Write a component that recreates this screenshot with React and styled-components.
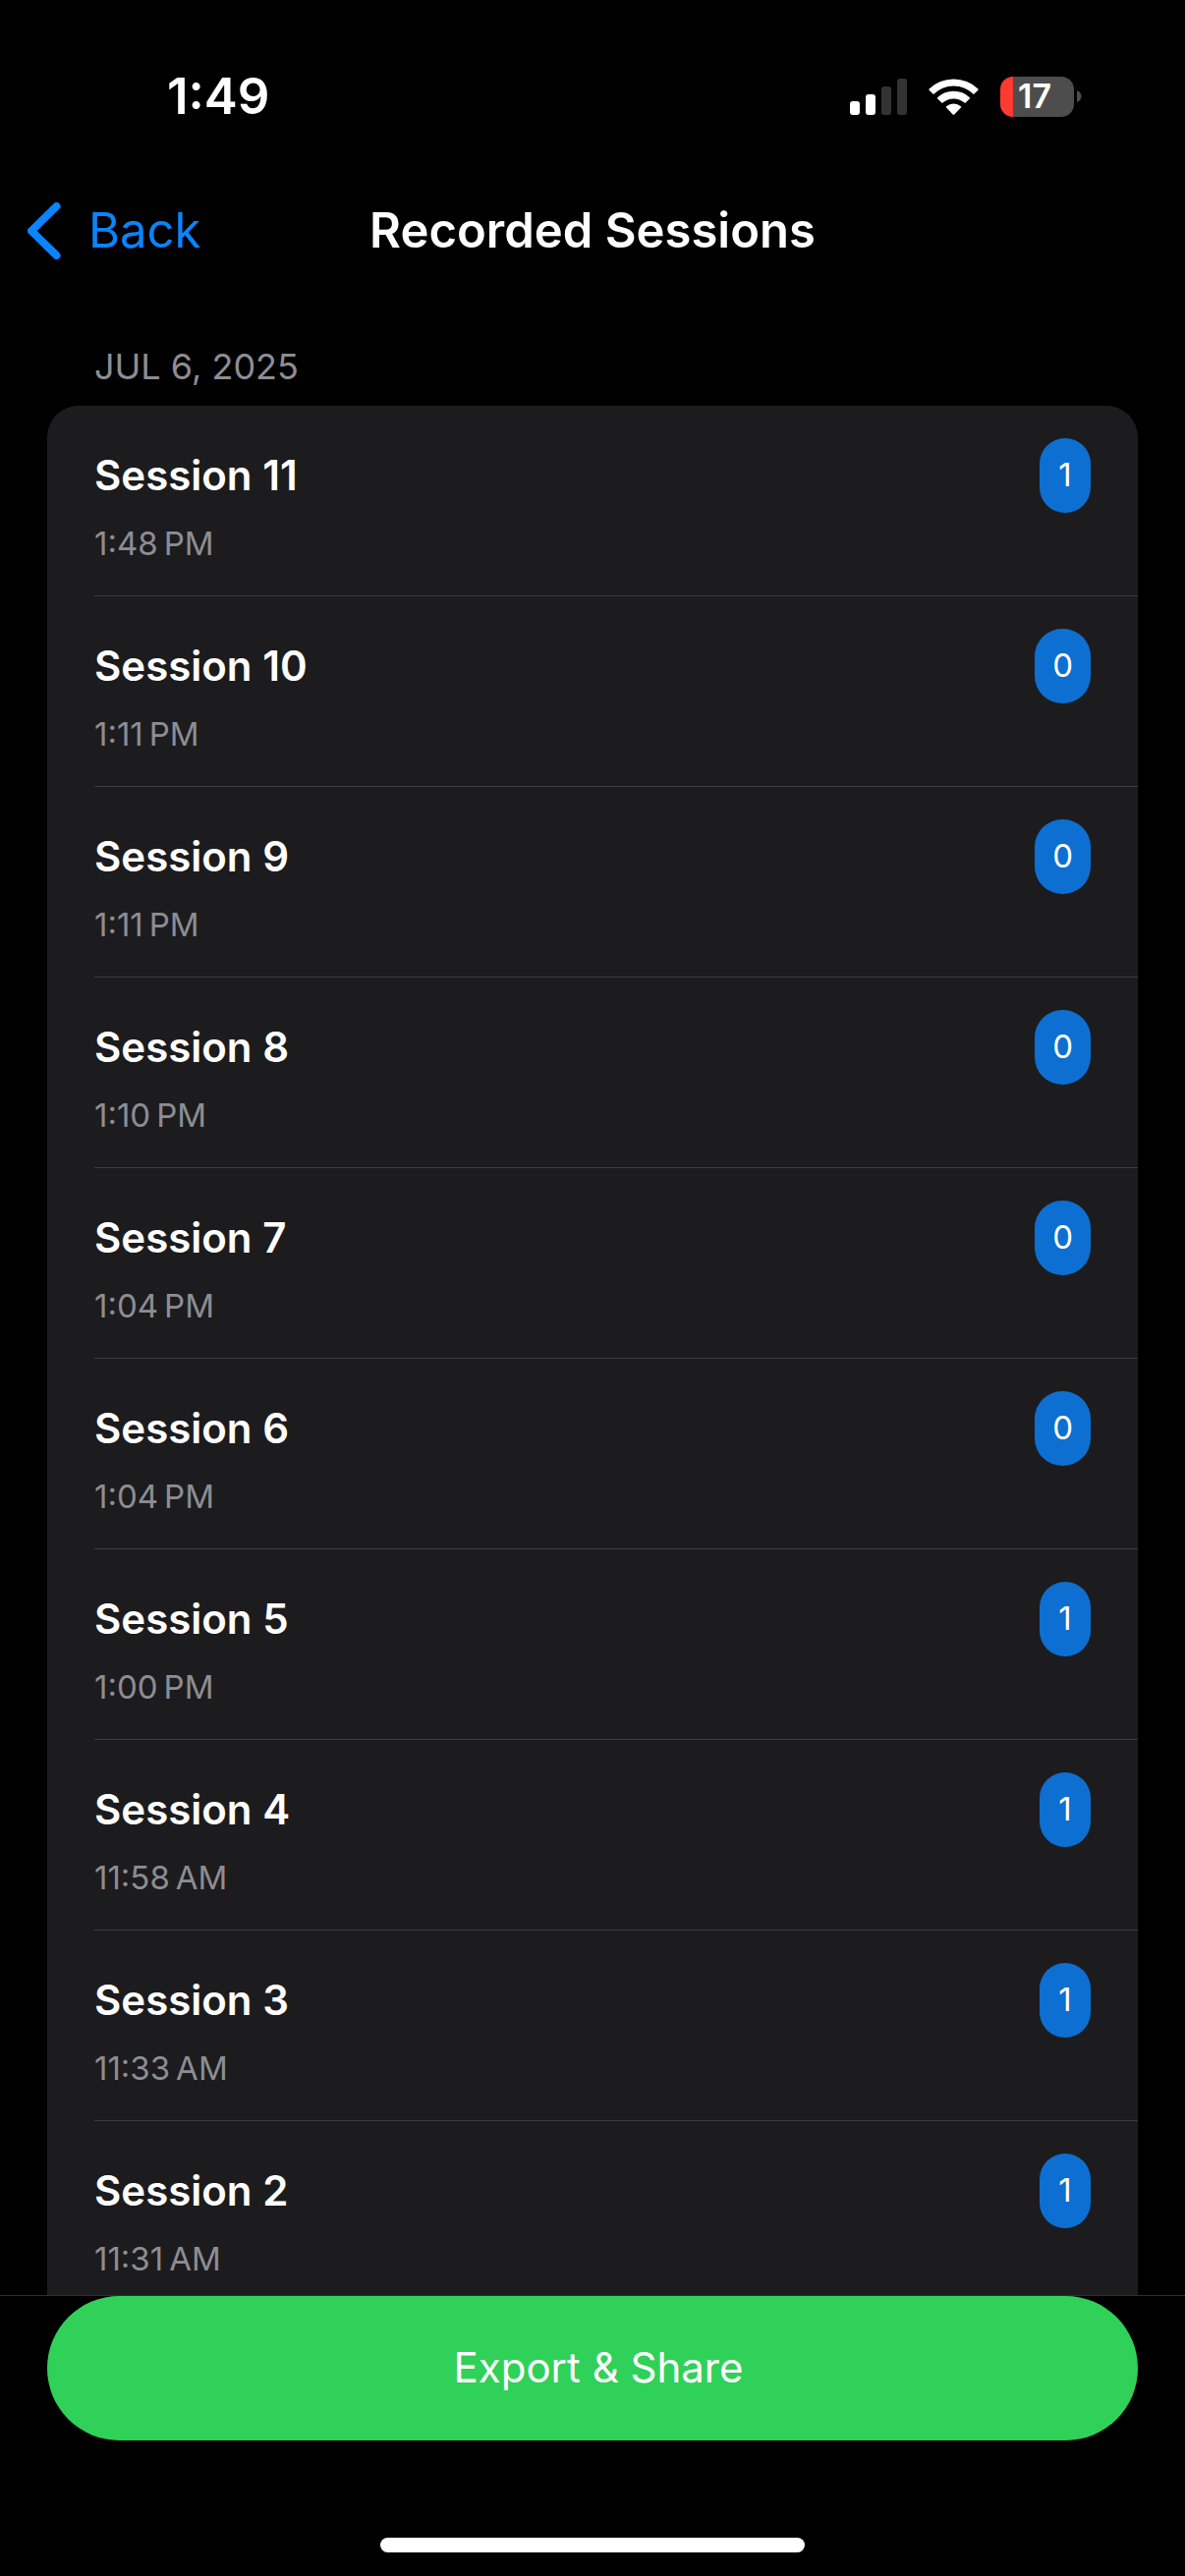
import React from "react";
import styled, { createGlobalStyle } from "styled-components";

const sessions = [
  { name: "Session 11", time: "1:48\u202fPM", count: 1 },
  { name: "Session 10", time: "1:11\u202fPM", count: 0 },
  { name: "Session 9", time: "1:11\u202fPM", count: 0 },
  { name: "Session 8", time: "1:10\u202fPM", count: 0 },
  { name: "Session 7", time: "1:04\u202fPM", count: 0 },
  { name: "Session 6", time: "1:04\u202fPM", count: 0 },
  { name: "Session 5", time: "1:00\u202fPM", count: 1 },
  { name: "Session 4", time: "11:58\u202fAM", count: 1 },
  { name: "Session 3", time: "11:33\u202fAM", count: 1 },
  { name: "Session 2", time: "11:31\u202fAM", count: 1 },
];

const GlobalStyle = createGlobalStyle`
  * { box-sizing: border-box; }
  body { margin: 0; background: #000; color: #fff; font-family: Inter, "Liberation Sans", sans-serif; }
  h1, h2, h3, p, ul { margin: 0; padding: 0; }
  button { border: 0; margin: 0; font-family: inherit; cursor: pointer; }
`;

const Screen = styled.div`
  display: flex;
  flex-direction: column;
  height: 100vh;
  overflow: hidden;
`;

const StatusBar = styled.header`
  display: flex;
  flex: none;
  align-items: center;
  justify-content: space-between;
  height: 176px;
  padding: 20px 105px 0 170px;
`;

const Clock = styled.time`
  font-size: 51px;
  line-height: 60px;
  font-weight: 600;
`;

const StatusIcons = styled.div`
  display: flex;
  align-items: center;
  gap: 22px;
`;

const Battery = styled.div`
  display: flex;
  align-items: center;
  gap: 3px;
`;

const BatteryBody = styled.div`
  width: 75px;
  height: 41px;
  padding-left: 18px;
  border-radius: 13px;
  background: linear-gradient(to right, #ff3b30 13px, #4d4d4d 13px);
  font-size: 34px;
  line-height: 40px;
  font-weight: 600;
`;

const NavBar = styled.nav`
  display: grid;
  flex: none;
  grid-template-columns: 1fr auto 1fr;
  align-items: center;
  height: 118px;
  padding: 0 28px;
`;

const BackButton = styled.button`
  display: flex;
  align-items: center;
  justify-self: start;
  gap: 28px;
  padding: 0;
  background: none;
  color: #0a84ff;
  font-size: 49px;
  line-height: 60px;
`;

const Title = styled.h1`
  font-size: 49px;
  line-height: 60px;
  font-weight: 600;
`;

const List = styled.main`
  flex: 1;
  min-height: 0;
  overflow-y: auto;
  scrollbar-width: none;
  padding: 55px 48px 0;
`;

const SectionDate = styled.h2`
  padding: 0 48px 16px;
  color: #8d8d93;
  font-size: 36px;
  line-height: 48px;
  font-weight: 400;
`;

const Card = styled.ul`
  list-style: none;
  border-radius: 32px 32px 0 0;
  background: #1c1c1e;
`;

const Row = styled.li`
  display: flex;
  align-items: flex-start;
  justify-content: space-between;
  height: 194px;
  margin-left: 48px;
  padding: 33px 48px 0 0;
  border-bottom: 1px solid #3d3d41;
  &:last-child { border-bottom: 0; }
`;

const SessionName = styled.h3`
  padding: 12px 0 21px;
  font-size: 42px;
  line-height: 52px;
  font-weight: 600;
`;

const SessionTime = styled.p`
  color: #8d8d93;
  font-size: 33px;
  line-height: 44px;
`;

const Badge = styled.span`
  min-width: 52px;
  padding: 0 18px 2px;
  border-radius: 28px;
  background: #0d6fd1;
  font-size: 33px;
  line-height: 74px;
  text-align: center;
`;

const Footer = styled.footer`
  display: flex;
  flex: none;
  flex-direction: column;
  align-items: center;
  gap: 99px;
  padding: 0 48px 24px;
  border-top: 1px solid #2e2e30;
`;

const ExportButton = styled.button`
  width: 100%;
  height: 147px;
  padding: 0 0 2px 12px;
  border-radius: 76px;
  background: #30d158;
  color: #fff;
  font-size: 42px;
`;

const HomeIndicator = styled.div`
  width: 432px;
  height: 15px;
  border-radius: 8px;
  background: #fff;
`;

function SignalIcon() {
  return (
    <svg width="58" height="37" viewBox="0 0 58 37" aria-hidden="true">
      <rect x="0" y="23" width="10" height="14" rx="3" fill="#fff" />
      <rect x="16" y="16" width="10" height="21" rx="3" fill="#fff" />
      <rect x="32" y="8" width="10" height="29" rx="3" fill="#333" />
      <rect x="48" y="0" width="10" height="37" rx="3" fill="#333" />
    </svg>
  );
}

function WifiIcon() {
  return (
    <svg width="51" height="37" viewBox="0 0 51 37" fill="#fff" aria-hidden="true">
      <path d="M0.6 10.4A36 36 0 0 1 50.4 10.4Q51 11 50.4 11.7L46 16.1A29 29 0 0 0 5 16.1L0.6 11.7Q0 11 0.6 10.4Z" />
      <path d="M9.2 19.2A23.6 23.6 0 0 1 41.8 19.2Q42.4 19.9 41.8 20.5L37.2 25.1A17 17 0 0 0 13.8 25.1L9.2 20.5Q8.6 19.9 9.2 19.2Z" />
      <path d="M18.1 28.2A11.4 11.4 0 0 1 32.9 28.2Q33.5 28.9 32.9 29.6L26.3 36.4Q25.5 37.1 24.7 36.4L18.1 29.6Q17.5 28.9 18.1 28.2Z" />
    </svg>
  );
}

export default function App() {
  return (
    <Screen>
      <GlobalStyle />
      <StatusBar>
        <Clock>1:49</Clock>
        <StatusIcons>
          <SignalIcon />
          <WifiIcon />
          <Battery>
            <BatteryBody>17</BatteryBody>
            <svg width="5" height="12" viewBox="0 0 5 12" aria-hidden="true">
              <path d="M0 0Q4.500 2 4.500 6T0 12Z" fill="#4d4d4d" />
            </svg>
          </Battery>
        </StatusIcons>
      </StatusBar>
      <NavBar>
        <BackButton type="button">
          <svg width="34" height="58" viewBox="0 0 34 58" aria-hidden="true">
            <path d="M29.500 4L4 29L29.500 54" fill="none" stroke="currentColor" strokeWidth="8" strokeLinecap="round" strokeLinejoin="round" />
          </svg>
          Back
        </BackButton>
        <Title>Recorded Sessions</Title>
      </NavBar>
      <List>
        <SectionDate>JUL 6, 2025</SectionDate>
        <Card>
          {sessions.map((s) => (
            <Row key={s.name}>
              <div>
                <SessionName>{s.name}</SessionName>
                <SessionTime>{s.time}</SessionTime>
              </div>
              <Badge>{s.count}</Badge>
            </Row>
          ))}
        </Card>
      </List>
      <Footer>
        <ExportButton type="button">Export &amp; Share</ExportButton>
        <HomeIndicator />
      </Footer>
    </Screen>
  );
}
